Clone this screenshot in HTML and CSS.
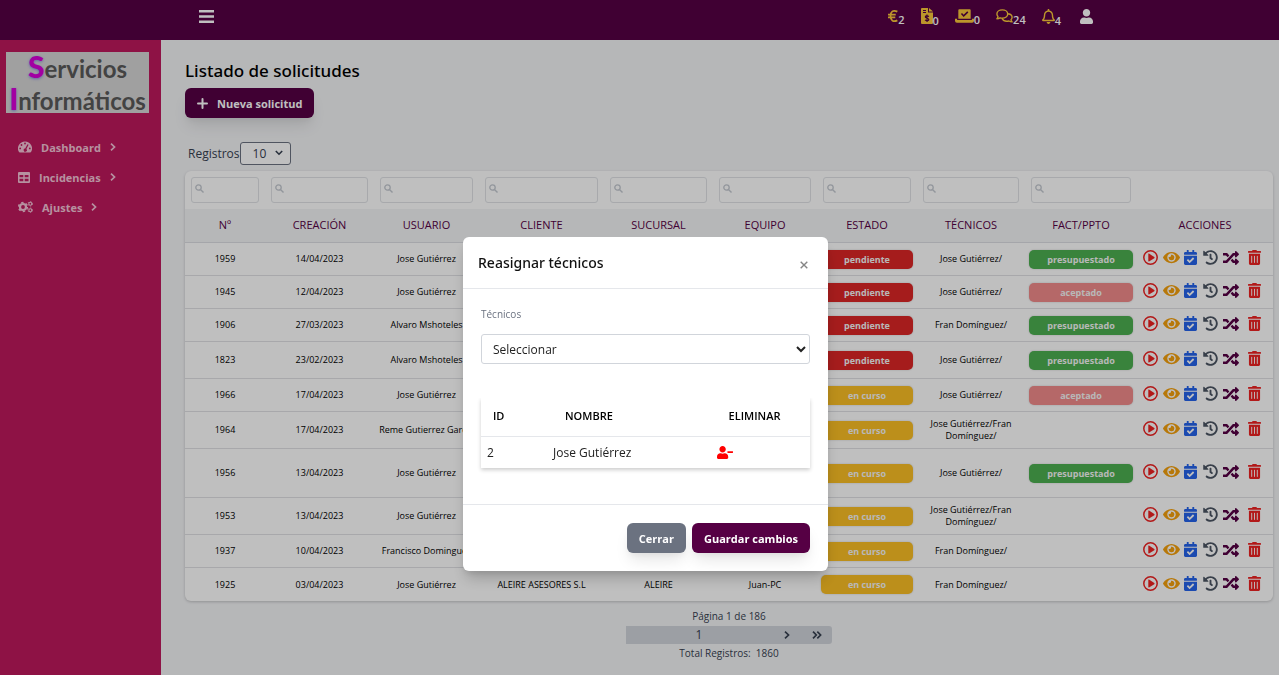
FILE: index.html
```html
<!DOCTYPE html>
<html lang="es">
<head>
<meta charset="utf-8">
<title>Listado de solicitudes</title>
<link rel="stylesheet" href="styles.css">
</head>
<body>
<svg class="sprite" aria-hidden="true">
  <symbol id="i-bars" viewBox="0 0 15 13"><path fill="currentColor" d="M0 0h15v2.400H0zM0 5.300h15v2.400H0zM0 10.600h15V13H0z"/></symbol>
  <symbol id="i-euro" viewBox="0 0 11 14"><path fill="none" stroke="currentColor" stroke-width="1.900" d="M10.300 2.200C5.500-.3 2.800 2.500 2.800 7s2.700 7.300 7.500 4.800M0 5.500h8.500M0 8.500h8"/></symbol>
  <symbol id="i-file" viewBox="0 0 12 16"><path fill="currentColor" fill-rule="evenodd" d="M1 0h6v4.500h5V15a1 1 0 0 1-1 1H1a1 1 0 0 1-1-1V1a1 1 0 0 1 1-1zm1 2v1h3V2zm0 2v1h3V4z"/><path fill="currentColor" d="M8 0l4 3.500H8z"/><path fill="none" stroke="#500040" stroke-width="1.200" d="M8 8.500C6 7.300 4.300 8 4.300 9c0 1.600 3.500.9 3.500 2.500 0 1.200-2 1.500-3.800.5M6 6.500v7.500"/></symbol>
  <symbol id="i-vote" viewBox="0 0 20 14"><path fill="currentColor" fill-rule="evenodd" d="M4.500 0h11a1 1 0 0 1 1 1v9h-13V1a1 1 0 0 1 1-1zM6.200 5l2.900 3 5-4.700-1.200-1.200L9.100 5.600 7.400 3.800z"/><path fill="currentColor" d="M0 10h2.200v1.200h15.600V10H20v2a2 2 0 0 1-2 2H2a2 2 0 0 1-2-2z"/></symbol>
  <symbol id="i-comments" viewBox="0 0 17 14"><path fill="none" stroke="currentColor" stroke-width="1.400" stroke-linejoin="round" d="M6.300.9c3 0 5.400 1.800 5.400 4.100S9.300 9.100 6.300 9.100c-.8 0-1.500-.1-2.200-.3-.8.500-1.900.9-3.200.9.600-.7 1-1.500 1.100-2.200C1.300 6.800.9 5.900.9 5 .9 2.700 3.300.9 6.300.9zM12.300 4.700c2.200.4 3.800 1.900 3.800 3.600 0 .9-.4 1.700-1.100 2.400.1.700.5 1.500 1.100 2.200-1.300 0-2.400-.4-3.200-.9-2.900.7-5.700-.3-6.800-2.300"/></symbol>
  <symbol id="i-bell" viewBox="0 0 448 512"><path fill="currentColor" d="M439.390 362.290c-19.320-20.760-55.470-51.990-55.470-154.290 0-77.700-54.480-139.900-127.940-155.160V32c0-17.670-14.320-32-31.980-32s-31.980 14.330-31.980 32v20.840C118.560 68.100 64.080 130.300 64.080 208c0 102.300-36.150 133.530-55.470 154.290-6 6.450-8.660 14.160-8.610 21.710.11 16.400 12.980 32 32.100 32h383.800c19.120 0 32-15.600 32.100-32 .05-7.550-2.610-15.270-8.610-21.710zM67.530 368c21.220-27.970 44.420-74.330 44.530-159.420 0-.2-.06-.38-.06-.58 0-61.860 50.140-112 112-112s112 50.140 112 112c0 .2-.06.38-.06.58.11 85.100 23.310 131.460 44.530 159.420H67.530zM224 512c35.320 0 63.970-28.650 63.970-64H160.030c0 35.350 28.650 64 63.970 64z"/></symbol>
  <symbol id="i-user" viewBox="0 0 448 512"><path fill="currentColor" d="M224 256c70.700 0 128-57.300 128-128S294.700 0 224 0 96 57.300 96 128s57.300 128 128 128zm89.600 32h-16.700c-22.200 10.200-46.900 16-72.900 16s-50.600-5.800-72.900-16h-16.700C60.200 288 0 348.200 0 422.400V464c0 26.500 21.500 48 48 48h352c26.500 0 48-21.500 48-48v-41.600c0-74.200-60.200-134.400-134.400-134.400z"/></symbol>
  <symbol id="i-user-minus" viewBox="0 0 640 512"><path fill="currentColor" d="M624 208H432c-8.800 0-16 7.200-16 16v32c0 8.800 7.200 16 16 16h192c8.800 0 16-7.200 16-16v-32c0-8.800-7.200-16-16-16zm-400 48c70.700 0 128-57.300 128-128S294.700 0 224 0 96 57.300 96 128s57.300 128 128 128zm89.600 32h-16.700c-22.200 10.200-46.900 16-72.900 16s-50.600-5.800-72.900-16h-16.700C60.200 288 0 348.200 0 422.400V464c0 26.500 21.500 48 48 48h352c26.500 0 48-21.500 48-48v-41.600c0-74.200-60.200-134.400-134.400-134.400z"/></symbol>
  <symbol id="i-gauge" viewBox="0 0 14 12"><path fill="currentColor" fill-rule="evenodd" d="M7 .5a7 7 0 0 1 6 10.600 1 1 0 0 1-.9.400H1.900a1 1 0 0 1-.9-.4A7 7 0 0 1 7 .5zM7 1.600a.9.900 0 1 0 0 1.800.9.900 0 0 0 0-1.800zM3.500 3.100a.9.900 0 1 0 0 1.800.9.900 0 0 0 0-1.800zM2.200 6.500a.9.900 0 1 0 0 1.800.9.900 0 0 0 0-1.800zm9.600 0a.9.900 0 1 0 0 1.800.9.900 0 0 0 0-1.800zM9.500 3.200L7.200 7.600a1.600 1.600 0 1 0 1.200.5l2.200-4.400z"/></symbol>
  <symbol id="i-table" viewBox="0 0 12 11"><path fill="currentColor" fill-rule="evenodd" d="M1 0h10a1 1 0 0 1 1 1v9a1 1 0 0 1-1 1H1a1 1 0 0 1-1-1V1a1 1 0 0 1 1-1zm.5 3v2.200h3.800V3zm5.200 0v2.200h3.800V3zM1.500 6.700v2.600h3.800V6.700zm5.200 0v2.600h3.800V6.700z"/></symbol>
  <symbol id="i-cogs" viewBox="0 0 15 12"><g fill="none" stroke="currentColor"><circle cx="5" cy="6" r="3" stroke-width="2.200"/><circle cx="5" cy="6" r="4.500" stroke-width="1.300" stroke-dasharray="2.400 2.312"/><circle cx="12.300" cy="2.800" r="1.500" stroke-width="1.100"/><circle cx="12.300" cy="2.800" r="2.300" stroke-width=".8" stroke-dasharray="1.200 1.209"/><circle cx="12.300" cy="9.200" r="1.500" stroke-width="1.100"/><circle cx="12.300" cy="9.200" r="2.300" stroke-width=".8" stroke-dasharray="1.200 1.209"/></g></symbol>
  <symbol id="i-chevron" viewBox="0 0 6 8"><path fill="none" stroke="currentColor" stroke-width="1.700" d="M1 .7L4.500 4 1 7.300"/></symbol>
  <symbol id="i-double" viewBox="0 0 10 8"><path fill="none" stroke="currentColor" stroke-width="1.700" d="M1 .7L4.300 4 1 7.300M5.300.7L8.600 4 5.300 7.300"/></symbol>
  <symbol id="i-down" viewBox="0 0 8 6"><path fill="none" stroke="currentColor" stroke-width="1.600" d="M.8 1L4 4.200 7.200 1"/></symbol>
  <symbol id="i-plus" viewBox="0 0 11 11"><path fill="none" stroke="currentColor" stroke-width="2" stroke-linecap="round" d="M5.500 1v9M1 5.500h9"/></symbol>
  <symbol id="i-close" viewBox="0 0 8 8"><path fill="none" stroke="currentColor" stroke-width="1.400" d="M.7.7l6.600 6.600M7.300.7L.7 7.300"/></symbol>
  <symbol id="i-search" viewBox="0 0 9 9"><path fill="none" stroke="currentColor" stroke-width="1.400" d="M5.700 5.700l2.800 2.800"/><circle cx="3.500" cy="3.500" r="2.700" fill="none" stroke="currentColor" stroke-width="1.300"/></symbol>
  <symbol id="i-play" viewBox="0 0 15 15"><circle cx="7.500" cy="7.500" r="6.700" fill="none" stroke="currentColor" stroke-width="1.500"/><path fill="currentColor" d="M5.300 3.900v7.200c0 .4.400.6.700.4l5.300-3.300c.4-.3.400-.9 0-1.200L6 3.600c-.3-.2-.7 0-.7.300z"/></symbol>
  <symbol id="i-eye" viewBox="0 0 576 512"><path fill="currentColor" d="M572.520 241.400C518.290 135.590 410.930 64 288 64S57.680 135.640 3.480 241.410a32.350 32.350 0 0 0 0 29.190C57.710 376.410 165.070 448 288 448s230.320-71.640 284.520-177.410a32.350 32.350 0 0 0 0-29.190zM288 400a144 144 0 1 1 144-144 143.930 143.930 0 0 1-144 144zm0-240a95.310 95.310 0 0 0-25.310 3.790 47.850 47.850 0 0 1-66.900 66.900A95.780 95.780 0 1 0 288 160z"/></symbol>
  <symbol id="i-calendar" viewBox="0 0 448 512"><path fill="currentColor" d="M436 160H12c-6.627 0-12-5.373-12-12v-36c0-26.510 21.490-48 48-48h48V12c0-6.627 5.373-12 12-12h40c6.627 0 12 5.373 12 12v52h128V12c0-6.627 5.373-12 12-12h40c6.627 0 12 5.373 12 12v52h48c26.510 0 48 21.490 48 48v36c0 6.627-5.373 12-12 12zM12 192h424c6.627 0 12 5.373 12 12v260c0 26.510-21.490 48-48 48H48c-26.510 0-48-21.490-48-48V204c0-6.627 5.373-12 12-12zm333.296 95.947l-28.169-28.398c-4.667-4.705-12.265-4.736-16.970-.068L194.120 364.665l-45.980-46.352c-4.667-4.704-12.266-4.736-16.971-.068l-28.397 28.170c-4.705 4.667-4.736 12.265-.068 16.970l82.601 83.269c4.667 4.705 12.265 4.736 16.970.068l142.953-141.805c4.705-4.667 4.736-12.265.068-16.970z"/></symbol>
  <symbol id="i-history" viewBox="0 0 512 512"><path fill="currentColor" d="M504 255.531c.253 136.640-111.180 248.372-247.820 248.468-59.015.042-113.223-20.530-155.822-54.911-11.077-8.940-11.905-25.541-1.839-35.607l11.267-11.267c8.609-8.609 22.353-9.551 31.891-1.984C173.062 425.135 212.781 440 256 440c101.705 0 184-82.311 184-184 0-101.705-82.311-184-184-184-48.814 0-93.149 18.969-126.068 49.932l50.754 50.754c10.080 10.080 2.941 27.314-11.313 27.314H24c-8.837 0-16-7.163-16-16V38.627c0-14.254 17.234-21.393 27.314-11.314l49.372 49.372C129.209 34.136 189.552 8 256 8c136.810 0 247.747 110.781 248 247.531zm-180.912 78.784l9.823-12.630c8.138-10.463 6.253-25.542-4.210-33.679L288 256.349V152c0-13.255-10.745-24-24-24h-16c-13.255 0-24 10.745-24 24v135.651l65.409 50.874c10.463 8.137 25.541 6.253 33.679-4.210z"/></symbol>
  <symbol id="i-random" viewBox="0 0 512 512"><path fill="currentColor" d="M504.971 359.029c9.373 9.373 9.373 24.569 0 33.941l-80 79.984c-15.010 15.010-40.971 4.490-40.971-16.971V416h-58.785a12.004 12.004 0 0 1-8.773-3.812l-70.556-75.596 53.333-57.143L352 336h32v-39.981c0-21.438 25.943-31.998 40.971-16.971l80 79.981zM12 176h84l52.781 56.551 53.333-57.143-70.556-75.596A11.999 11.999 0 0 0 122.785 96H12c-6.627 0-12 5.373-12 12v56c0 6.627 5.373 12 12 12zm372 0v39.984c0 21.460 25.961 31.980 40.971 16.971l80-79.984c9.373-9.373 9.373-24.569 0-33.941l-80-79.981C409.943 24.021 384 34.582 384 56.019V96h-58.785a12.004 12.004 0 0 0-8.773 3.812L96 336H12c-6.627 0-12 5.373-12 12v56c0 6.627 5.373 12 12 12h110.785c3.326 0 6.503-1.381 8.773-3.812L352 176h32z"/></symbol>
  <symbol id="i-trash" viewBox="0 0 448 512"><path fill="currentColor" d="M32 464a48 48 0 0 0 48 48h288a48 48 0 0 0 48-48V128H32zm272-256a16 16 0 0 1 32 0v224a16 16 0 0 1-32 0zm-96 0a16 16 0 0 1 32 0v224a16 16 0 0 1-32 0zm-96 0a16 16 0 0 1 32 0v224a16 16 0 0 1-32 0zM432 32H312l-9.400-18.700A24 24 0 0 0 281.100 0H166.800a23.720 23.720 0 0 0-21.400 13.300L136 32H16A16 16 0 0 0 0 48v32a16 16 0 0 0 16 16h416a16 16 0 0 0 16-16V48a16 16 0 0 0-16-16z"/></symbol>
</svg>

<header class="topbar">
  <button class="icon-btn" type="button" aria-label="Menú"><svg width="15" height="13"><use href="#i-bars"/></svg></button>
  <nav class="alerts" aria-label="Avisos">
    <a href="#" class="alert"><svg width="10" height="14"><use href="#i-euro"/></svg><span class="count">2</span></a>
    <a href="#" class="alert"><svg width="12" height="16"><use href="#i-file"/></svg><span class="count">0</span></a>
    <a href="#" class="alert"><svg width="19" height="14"><use href="#i-vote"/></svg><span class="count">0</span></a>
    <a href="#" class="alert"><svg width="17" height="14"><use href="#i-comments"/></svg><span class="count">24</span></a>
    <a href="#" class="alert"><svg width="13" height="15"><use href="#i-bell"/></svg><span class="count">4</span></a>
    <a href="#" class="alert profile" aria-label="Perfil"><svg width="13" height="15"><use href="#i-user"/></svg></a>
  </nav>
</header>

<div class="shell">
  <aside class="sidebar">
    <div class="logo"><span><b>S</b>ervicios</span><span><b>I</b>nformáticos</span></div>
    <nav class="menu" aria-label="Principal">
      <a href="#"><svg width="14" height="12"><use href="#i-gauge"/></svg>Dashboard<svg width="6" height="8"><use href="#i-chevron"/></svg></a>
      <a href="#"><svg width="12" height="11"><use href="#i-table"/></svg>Incidencias<svg width="6" height="8"><use href="#i-chevron"/></svg></a>
      <a href="#"><svg width="15" height="12"><use href="#i-cogs"/></svg>Ajustes<svg width="6" height="8"><use href="#i-chevron"/></svg></a>
    </nav>
  </aside>

  <main class="content">
    <h1>Listado de solicitudes</h1>
    <button class="btn btn-primary btn-new" type="button"><svg width="11" height="11"><use href="#i-plus"/></svg>Nueva solicitud</button>
    <div class="page-size">
      <label for="size">Registros</label>
      <span class="size-box">
        <select id="size"><option>10</option></select>
        <svg width="8" height="6"><use href="#i-down"/></svg>
      </span>
    </div>

    <table class="requests">
      <colgroup><col class="c-num"><col class="c-date"><col class="c-user"><col class="c-client"><col class="c-branch"><col class="c-device"><col class="c-state"><col class="c-tech"><col class="c-invoice"><col class="c-actions"></colgroup>
      <thead>
        <tr class="filters" id="filters"></tr>
        <tr class="titles" id="titles"></tr>
      </thead>
      <tbody id="rows"></tbody>
    </table>

    <footer class="pager">
      <span>Página 1 de 186</span>
      <div class="pages">
        <button type="button" class="current">1</button>
        <button type="button" aria-label="Siguiente"><svg width="6" height="8"><use href="#i-chevron"/></svg></button>
        <button type="button" aria-label="Última"><svg width="10" height="8"><use href="#i-double"/></svg></button>
      </div>
      <span>Total Registros:&nbsp; 1860</span>
    </footer>
  </main>
</div>

<div class="backdrop">
  <section class="modal" role="dialog" aria-modal="true" aria-labelledby="modal-title">
    <header class="modal-head">
      <h2 id="modal-title">Reasignar técnicos</h2>
      <button type="button" class="icon-btn close" aria-label="Cerrar ventana"><svg width="8" height="8"><use href="#i-close"/></svg></button>
    </header>
    <div class="modal-body">
      <label for="tech">Técnicos</label>
      <select id="tech"><option>Seleccionar</option></select>
      <table class="assigned">
        <colgroup><col class="a-id"><col class="a-name"><col class="a-del"></colgroup>
        <thead><tr><th>ID</th><th>NOMBRE</th><th>ELIMINAR</th></tr></thead>
        <tbody><tr><td>2</td><td>Jose Gutiérrez</td><td class="del"><button type="button" class="icon-btn" aria-label="Eliminar"><svg width="16" height="13"><use href="#i-user-minus"/></svg></button></td></tr></tbody>
      </table>
    </div>
    <footer class="modal-foot">
      <button type="button" class="btn btn-gray">Cerrar</button>
      <button type="button" class="btn btn-primary">Guardar cambios</button>
    </footer>
  </section>
</div>
<script src="app.js"></script>
</body>
</html>
```
FILE: styles.css
```css
* { box-sizing: border-box; }
body {
  margin: 0;
  min-height: 100vh;
  display: flex;
  flex-direction: column;
  background: #f3f4f6;
  font-family: "Open Sans", "Noto Sans", sans-serif;
  font-size: 12px;
  color: #000;
}
button, select, input { font: inherit; color: inherit; }
button { cursor: pointer; }
a { color: inherit; text-decoration: none; }
svg { display: block; flex: none; }
.sprite { position: absolute; width: 0; height: 0; }
.icon-btn { display: inline-flex; padding: 0; border: 0; background: none; }

/* Top bar */
.topbar {
  display: flex;
  align-items: center;
  justify-content: space-between;
  height: 40px;
  padding: 0 186px 8px 199px;
  background: #560044;
  color: #fff;
}
.alerts { display: flex; align-items: center; gap: 16px; }
.alert { display: flex; align-items: center; color: #fbc93a; }
.count { align-self: flex-end; height: 12px; line-height: 18px; font-size: 11px; font-weight: 600; color: #fff; }
.profile { margin-left: 3px; color: #fff; }

/* Sidebar */
.shell { display: flex; flex: 1; }
.sidebar { width: 161px; flex: none; padding: 12px 12px 12px 6px; background: #be185d; }
.logo {
  display: flex;
  flex-direction: column;
  align-items: center;
  height: 61px;
  background: #d6d6d6;
  color: #5a5a5a;
  font: 700 24px/30px Lato, sans-serif;
  white-space: nowrap;
}
.logo b { color: #d800d8; font-size: 30px; line-height: 28px; text-shadow: 0 1px 3px #8888dd; }
.menu { display: flex; flex-direction: column; padding: 19px 0 0 12px; }
.menu a { display: flex; align-items: center; gap: 9px; height: 30px; color: #f3c3d6; font-size: 11px; font-weight: 700; }

/* Page */
.content { flex: 1; min-width: 0; padding: 20px 6px 0 24px; }
h1 { margin: 0; font: 500 17px/22px "Noto Sans", sans-serif; }
.btn {
  display: inline-flex;
  align-items: center;
  justify-content: center;
  height: 30px;
  padding: 0 12px;
  border: 0;
  border-radius: 6px;
  color: #fff;
  font-size: 11px;
  font-weight: 700;
  white-space: nowrap;
  box-shadow: 0 10px 15px -3px rgba(0, 0, 0, .1), 0 4px 6px -2px rgba(0, 0, 0, .05);
}
.btn-primary { background: #560044; }
.btn-gray { background: #6b7280; }
.btn-new { margin-top: 6px; gap: 9px; }
.page-size { display: flex; align-items: center; margin: 24px 0 6px; padding-left: 3px; color: #374151; }
.size-box { position: relative; }
.size-box select {
  display: block;
  width: 51px;
  height: 23px;
  padding: 0 12px;
  appearance: none;
  border: 1px solid #6b7280;
  border-radius: 3px;
  background: #fff;
}
.size-box svg { position: absolute; right: 8px; top: 8px; pointer-events: none; }

/* Requests table */
.requests {
  width: 100%;
  table-layout: fixed;
  border-spacing: 0;
  border-radius: 6px;
  background: #fff;
  box-shadow: 0 1px 3px rgba(0, 0, 0, .2);
  font-size: 9px;
  line-height: 12px;
  text-align: center;
}
.c-num { width: 80px; }
.c-date { width: 109px; }
.c-user { width: 105px; }
.c-client { width: 125px; }
.c-branch { width: 109px; }
.c-device { width: 104px; }
.c-state { width: 100px; }
.c-tech { width: 108px; }
.c-invoice { width: 112px; }
.c-actions { width: 136px; }
.filters th { height: 38px; padding: 0 6px; }
.filter { position: relative; display: block; }
.filter input { display: block; width: 100%; height: 26px; padding: 0 4px 0 18px; border: 1px solid #e0e2e6; border-radius: 3px; background: #fff; }
.filter svg { position: absolute; left: 4px; top: 7px; color: #c3c8d0; }
.titles th { height: 34px; padding: 0 0 2px; background: #f3f4f6; border-bottom: 1px solid #dcdee3; color: #560044; font-size: 11px; font-weight: 500; }
.requests td { height: 33px; padding: 0 4px; border-bottom: 1px solid #e0e1e5; }
.requests .two td { height: 37px; }
.requests .three td { height: 49px; }
.requests tbody tr:last-child td { border-bottom: 0; }
.requests td.nowrap { padding: 0; white-space: nowrap; }
.requests td.tech { padding: 0 10px; }
.badge { display: block; height: 19px; border-radius: 5px; color: #f6f6f6; font-weight: 700; line-height: 19px; box-shadow: 0 0 2px rgba(0, 0, 0, .2); }
.pendiente { background: #dc2626; }
.curso { background: #fbbf24; }
.presupuestado { background: #4caf50; }
.aceptado { background: #f28b8b; }
.actions { display: flex; align-items: center; padding-left: 2px; padding-bottom: 3px; }
.actions button { display: inline-flex; justify-content: center; width: 20px; padding: 0; border: 0; background: none; }
.actions .play { width: 18px; justify-content: flex-start; color: #ee2222; }
.actions .eye { color: #f5a00c; }
.actions .calendar { color: #2563eb; width: 18px; }
.actions .history { color: #4b5563; width: 22px; }
.actions .random { color: #560044; }
.actions .trash { color: #ee2222; width: 26px; }

.pager { display: flex; flex-direction: column; align-items: center; margin-top: 6px; color: #374151; font-size: 10px; line-height: 19px; }
.pages { display: flex; width: 206px; height: 18px; border-radius: 0 3px 3px 0; background: #d1d5db; }
.pages button { display: flex; align-items: center; justify-content: center; width: 30px; padding: 0; border: 0; background: none; }
.pages .current { flex: 1; font-size: 12px; line-height: 18px; }

/* Modal */
.backdrop {
  position: fixed;
  inset: 0;
  display: flex;
  align-items: flex-start;
  justify-content: center;
  padding: 237px 0 0 12px;
  background: rgba(0, 0, 0, .25);
}
.modal { width: 365px; border-radius: 6px; background: #fff; box-shadow: 0 10px 15px -3px rgba(0, 0, 0, .2), 0 4px 6px -2px rgba(0, 0, 0, .1); }
.modal-head { display: flex; align-items: center; justify-content: space-between; height: 52px; padding: 0 20px 0 15px; border-bottom: 1px solid #e5e7eb; }
.modal-head h2 { margin: 0; font: 500 14px/20px "Noto Sans", sans-serif; color: #111; }
.close { margin-top: 5px; color: #858585; }
.modal-body { padding: 16px 18px 36px; }
.modal-body label { display: block; height: 29px; line-height: 18px; font-size: 10px; color: #6b7280; }
.modal-body select { display: block; width: 100%; height: 30px; padding: 0 0 0 7px; border: 1px solid #d1d5db; border-radius: 3px; background: #fff; color: #222; }
.assigned { width: 100%; margin-top: 34px; table-layout: fixed; border-spacing: 0; box-shadow: 0 2px 4px rgba(0, 0, 0, .2); clip-path: inset(0 -6px -8px -6px); }
.a-id { width: 66px; }
.a-name { width: 148px; }
.assigned th { height: 39px; padding: 0 12px 4px; border-bottom: 1px solid #e5e7eb; font-size: 11px; font-weight: 600; text-align: left; }
.assigned th:nth-child(2) { padding-left: 18px; }
.assigned th:nth-child(3) { padding: 0 0 4px 4px; text-align: center; }
.assigned td { height: 31px; padding: 0 6px; color: #222; }
.del .icon-btn { padding: 0 0 2px 16px; color: #f00; vertical-align: middle; }
.modal-foot { display: flex; justify-content: flex-end; gap: 6px; padding: 18px; border-top: 1px solid #e5e7eb; }
```
FILE: app.js
```js
const columns = ["Nº", "CREACIÓN", "USUARIO", "CLIENTE", "SUCURSAL", "EQUIPO", "ESTADO", "TÉCNICOS", "FACT/PPTO", "ACCIONES"];

const requests = [
  { id: 1959, date: "14/04/2023", user: "Jose Gutiérrez", state: "pendiente", tech: "Jose Gutiérrez/", invoice: "presupuestado" },
  { id: 1945, date: "12/04/2023", user: "Jose Gutiérrez", state: "pendiente", tech: "Jose Gutiérrez/", invoice: "aceptado" },
  { id: 1906, date: "27/03/2023", user: "Alvaro Mshoteles", state: "pendiente", tech: "Fran Domínguez/", invoice: "presupuestado" },
  { id: 1823, date: "23/02/2023", user: "Alvaro Mshoteles", state: "pendiente", tech: "Jose Gutiérrez/", invoice: "presupuestado", size: "two" },
  { id: 1966, date: "17/04/2023", user: "Jose Gutiérrez", state: "en curso", tech: "Jose Gutiérrez/", invoice: "aceptado" },
  { id: 1964, date: "17/04/2023", user: "Reme Gutierrez Garcia", state: "en curso", tech: "Jose Gutiérrez/Fran Domínguez/", size: "two" },
  { id: 1956, date: "13/04/2023", user: "Jose Gutiérrez", state: "en curso", tech: "Jose Gutiérrez/", invoice: "presupuestado", size: "three" },
  { id: 1953, date: "13/04/2023", user: "Jose Gutiérrez", state: "en curso", tech: "Jose Gutiérrez/Fran Domínguez/", size: "two" },
  { id: 1937, date: "10/04/2023", user: "Francisco Dominguez", state: "en curso", tech: "Fran Domínguez/" },
  { id: 1925, date: "03/04/2023", user: "Jose Gutiérrez", client: "ALEIRE ASESORES S.L", branch: "ALEIRE", device: "Juan-PC", state: "en curso", tech: "Fran Domínguez/" }
];

const actions = [
  ["play", "Iniciar", 15, 15],
  ["eye", "Ver", 17, 15],
  ["calendar", "Agendar", 13, 15],
  ["history", "Historial", 15, 15],
  ["random", "Reasignar", 16, 16],
  ["trash", "Eliminar", 13, 15]
];

const icon = (name, w, h) => `<svg width="${w}" height="${h}"><use href="#i-${name}"/></svg>`;
const badge = (text) => text ? `<span class="badge ${text.replace("en ", "")}">${text}</span>` : "";
const buttons = actions.map(([name, label, w, h]) =>
  `<button type="button" class="${name}" aria-label="${label}">${icon(name, w, h)}</button>`).join("");

document.getElementById("filters").innerHTML = columns.map((name, i) =>
  i < 9 ? `<th><label class="filter">${icon("search", 9, 9)}<input type="text" aria-label="${name}"></label></th>` : "<th></th>").join("");
document.getElementById("titles").innerHTML = columns.map((name) => `<th scope="col">${name}</th>`).join("");
document.getElementById("rows").innerHTML = requests.map((r) => `<tr class="${r.size || ""}">
  <td>${r.id}</td><td>${r.date}</td><td class="nowrap">${r.user}</td>
  <td class="nowrap">${r.client || ""}</td><td>${r.branch || ""}</td><td>${r.device || ""}</td>
  <td>${badge(r.state)}</td><td class="tech">${r.tech}</td><td>${badge(r.invoice)}</td>
  <td><div class="actions">${buttons}</div></td></tr>`).join("");
```
